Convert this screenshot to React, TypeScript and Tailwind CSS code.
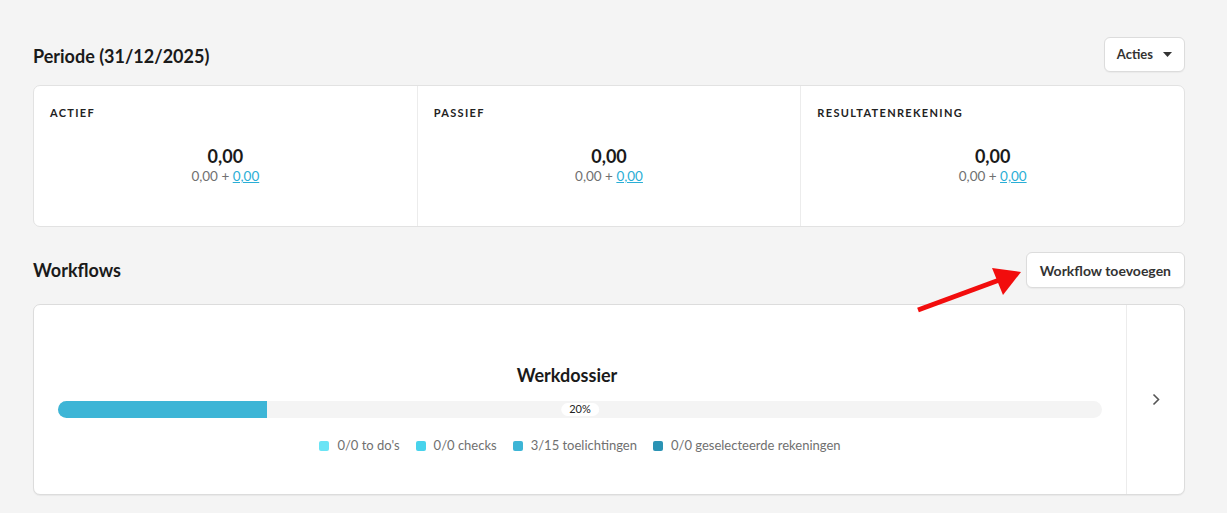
import React from "react";

const legend = [
  { c: "bg-[#6ae4f5]", t: "0/0 to do's" },
  { c: "bg-[#48d3ec]", t: "0/0 checks" },
  { c: "bg-[#3db5d6]", t: "3/15 toelichtingen" },
  { c: "bg-[#2b93b4]", t: "0/0 geselecteerde rekeningen" },
];

function Cell({ label, last }: { label: string; last?: boolean }) {
  return (
    <div className={`flex-1 flex flex-col pt-[20px] pl-[16px] pr-4 ${last ? "" : "border-r border-[#ececec]"}`}>
      <div className="text-[11px] font-bold tracking-[0.12em] text-[#222] leading-[14px]">{label}</div>
      <div className="flex flex-col items-center mt-[24px]">
        <div className="text-[18px] font-bold text-[#1a1a1a] leading-[24px]">0,00</div>
        <div className="text-[13.5px] text-[#707070] leading-[17px]">
          0,00 + <span className="text-[#2aaed6] underline">0,00</span>
        </div>
      </div>
    </div>
  );
}

export default function App() {
  return (
    <div className="relative w-[1227px] h-[513px] bg-[#f4f4f4] overflow-hidden px-[33px] pt-[37px] font-['Lato','Noto_Sans',sans-serif] text-[#1a1a1a]">
      <div className="h-[35px] flex items-center justify-between mr-[9px]">
        <h1 className="text-[18px] font-bold leading-none pt-[2px]">Periode (31/12/2025)</h1>
        <button className="h-[35px] px-[12px] bg-white border border-[#dcdcdc] rounded-[6px] flex items-center gap-[10px] text-[13px] font-bold text-[#333] shadow-[0_1px_1px_rgba(0,0,0,0.04)]">
          Acties
          <svg width="9" height="5" viewBox="0 0 9 5"><path d="M0 0h9L4.5 5z" fill="#333" /></svg>
        </button>
      </div>

      <div className="mt-[13px] h-[142px] mr-[9px] bg-white border border-[#e2e2e2] rounded-[7px] flex">
        <Cell label="ACTIEF" />
        <Cell label="PASSIEF" />
        <Cell label="RESULTATENREKENING" last />
      </div>

      <div className="mt-[25px] h-[36px] flex items-center justify-between mr-[9px]">
        <h2 className="text-[18px] font-bold leading-none">Workflows</h2>
        <button className="h-[36px] px-[13px] bg-white border border-[#dcdcdc] rounded-[6px] text-[14px] font-bold text-[#333] shadow-[0_1px_1px_rgba(0,0,0,0.04)]">
          Workflow toevoegen
        </button>
      </div>

      <div className="mt-[16px] h-[191px] mr-[9px] bg-white border border-[#dcdcdc] rounded-[7px] flex shadow-[0_1px_1px_rgba(0,0,0,0.05)]">
        <div className="flex-1 flex flex-col items-center pt-[58px] px-[24px]">
          <div className="text-[18px] font-bold leading-[24px] mr-[26px]">Werkdossier</div>
          <div className="relative w-full h-[17px] mt-[14px] bg-[#f4f4f4] rounded-full">
            <div className="h-full w-[20%] bg-[#3db5d6] rounded-l-full" />
            <div className="absolute top-[2px] left-1/2 -translate-x-1/2 bg-white rounded-full px-[8px] h-[13px] flex items-center text-[11px] text-[#222]">
              20%
            </div>
          </div>
          <div className="flex items-center gap-[16px] mt-[19px] text-[13px] text-[#707070] leading-[17px]">
            {legend.map((l) => (
              <div key={l.t} className="flex items-center gap-[8px]">
                <span className={`w-[10px] h-[10px] rounded-[2px] ${l.c}`} />
                {l.t}
              </div>
            ))}
          </div>
        </div>
        <div className="w-[58px] border-l border-[#ececec] flex items-center justify-center">
          <svg width="8" height="13" viewBox="0 0 8 13"><path d="M1.5 1.5l5 5-5 5" stroke="#555" strokeWidth="1.6" fill="none" /></svg>
        </div>
      </div>

      <svg className="absolute left-[910px] top-[265px]" width="120" height="55" viewBox="0 0 120 55">
        <line x1="8" y1="45" x2="92" y2="14" stroke="#f20d0d" strokeWidth="5" />
        <polygon points="111,7 82,3 93,30" fill="#f20d0d" />
      </svg>
    </div>
  );
}
